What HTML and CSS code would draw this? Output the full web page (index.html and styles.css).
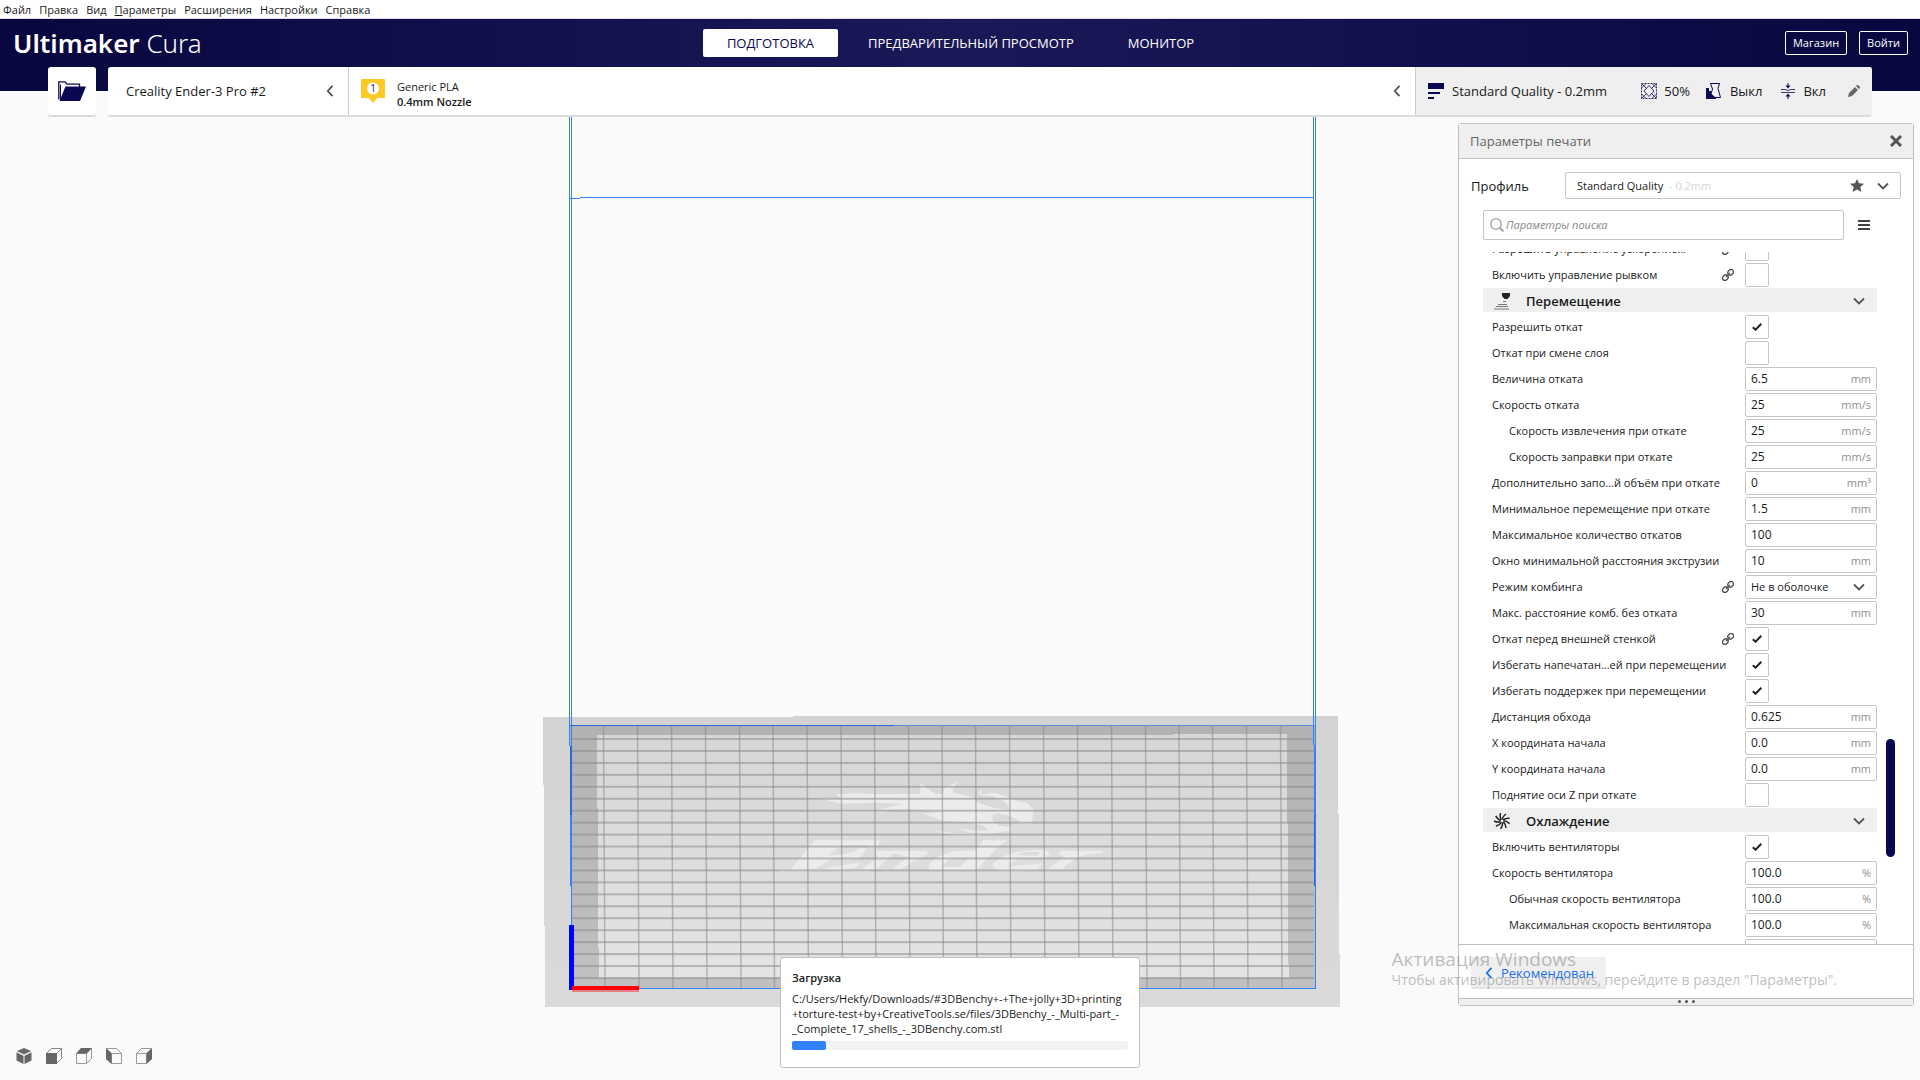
FILE: index.html
```html
<!DOCTYPE html>
<html lang="ru">
<head>
<meta charset="utf-8">
<title>Ultimaker Cura</title>
<link rel="stylesheet" href="styles.css">
</head>
<body>
<svg class="defs" aria-hidden="true">
  <symbol id="link" viewBox="0 0 12 12"><g fill="none" stroke="#555" stroke-width="1.400" transform="rotate(-45 6 6)"><rect x="-.8" y="3.600" width="6" height="4.800" rx="2.400"/><rect x="6.800" y="3.600" width="6" height="4.800" rx="2.400"/><path d="M3.200 6h5.600"/></g></symbol>
  <symbol id="down" viewBox="0 0 12 12"><path d="M1 3.500 6 8.500 11 3.500" fill="none" stroke="#555" stroke-width="1.800"/></symbol>
  <symbol id="left" viewBox="0 0 12 12"><path d="M8.500 .8 3.800 6 8.500 11.200" fill="none" stroke="currentColor" stroke-width="1.800"/></symbol>
</svg>

<nav class="menubar">
  <button>Файл</button><button>Правка</button><button>Вид</button><button><u>П</u>араметры</button><button>Расширения</button><button>Настройки</button><button>Справка</button>
</nav>

<header class="top">
  <div class="brandbar">
    <div class="logo"><b>Ultimaker</b> Cura</div>
    <nav class="stages">
      <button class="stage-tab active">ПОДГОТОВКА</button>
      <button class="stage-tab">ПРЕДВАРИТЕЛЬНЫЙ ПРОСМОТР</button>
      <button class="stage-tab">МОНИТОР</button>
    </nav>
    <div class="account">
      <button class="outline">Магазин</button>
      <button class="outline">Войти</button>
    </div>
  </div>
  <div class="toolbar">
    <button class="open" aria-label="Открыть файл">
      <svg width="28" height="20" viewBox="0 0 28 20"><path d="M.8 18.500V.8H7l2 2.400h12.500V6" fill="none" stroke="#0a0850" stroke-width="1.300"/><path d="M2.500 18V3.500" stroke="#0a0850" stroke-width="1"/><path d="M7.500 5.500H28L22 20H1.500z" fill="#0a0850"/></svg>
    </button>
    <div class="config">
      <button class="machine"><span>Creality Ender-3 Pro #2</span><svg class="chev" width="12" height="14"><use href="#left"/></svg></button>
      <button class="material">
        <svg width="24" height="24" viewBox="0 0 24 24"><path d="M1 0h22q1 0 1 1v17q0 1-1 1h-6.500L12 24 7.500 19H1q-1 0-1-1V1q0-1 1-1z" fill="#ffc924"/><circle cx="12" cy="9.500" r="6" fill="#fff"/><text x="12" y="13" text-anchor="middle" font-size="10" fill="#222">1</text></svg>
        <span class="material-text"><span>Generic PLA</span><b>0.4mm Nozzle</b></span>
        <svg class="chev" width="12" height="14"><use href="#left"/></svg>
      </button>
      <button class="summary">
        <svg width="16" height="16" viewBox="0 0 16 16" fill="#0a0850"><path d="M0 0h16v6H0zM0 9h12v2H0zM0 14h6v2H0z"/></svg>
        <span class="quality">Standard Quality - 0.2mm</span>
        <svg width="16" height="16" viewBox="0 0 16 16" fill="none" stroke="#0a0850" stroke-width=".8"><path d="M.5.5h15v15H.5z" stroke-dasharray="2 1"/><path d="M8 2.500 13 8l-5 5.500L3 8zM.5 5 5 .5M11 .5 15.500 5M.5 11 5 15.500M15.500 11 11 15.500M.5.5l5 5M15.500.5l-5 5M.5 15.500l5-5M15.500 15.500l-5-5"/></svg>
        <span class="infill">50%</span>
        <svg width="16" height="16" viewBox="0 0 16 16"><path d="M0 5h3v6h4v5H0zM3 8h2v5h5v3H3z" fill="#0a0850"/><path d="M4.500.5h9l-1.500 5 2.500 9H9L5 11l1.500-5z" fill="#efefef" stroke="#0a0850"/></svg>
        <span class="support">Выкл</span>
        <svg width="14" height="16" viewBox="0 0 14 16"><path d="M7 0v4M7 16v-4" stroke="#0a0850"/><path d="M4.500 2.500h5L7 5.500zM4.500 13.500h5L7 10.500z" fill="#0a0850"/><path d="M0 9.500h14M0 6.500h4q3 2 6 0h4" fill="none" stroke="#0a0850" opacity=".8"/></svg>
        <span class="adhesion">Вкл</span>
        <svg width="12" height="12" viewBox="0 0 12 12" fill="#666"><path d="M0 12l1-4 6-6 3 3-6 6zM8 1l1-1h1l2 2v1l-1 1z"/></svg>
      </button>
    </div>
  </div>
</header>

<main class="viewport">
  <svg class="scene" viewBox="0 117 1920 963" preserveAspectRatio="xMidYMax slice" shape-rendering="crispEdges" aria-hidden="true">
    <defs>
      <linearGradient id="base" x1="0" y1="0" x2="0" y2="1"><stop offset="0" stop-color="#d3d3d3"/><stop offset="1" stop-color="#dadada"/></linearGradient>
      <linearGradient id="rim" x1="0" y1="0" x2="0" y2="1"><stop offset="0" stop-color="#b2b2b2"/><stop offset="1" stop-color="#c0c0c0"/></linearGradient>
      <linearGradient id="bed" x1="0" y1="0" x2="0" y2="1"><stop offset="0" stop-color="#d6d6d6"/><stop offset="1" stop-color="#e4e4e4"/></linearGradient>
      <pattern id="rows" x="0" y="738" width="12" height="11.950" patternUnits="userSpaceOnUse"><rect width="12" height="1.500" fill="#8b8b8b" fill-opacity=".55"/></pattern>
    </defs>
    <path fill="url(#base)" d="M543 717H793V716H1338V814H1339V954H1340V1007H545V926H544V785H543z"/>
    <path fill="url(#rim)" d="M570 725H1315V988H571z"/>
    <path fill="url(#bed)" d="M597 735H1173V734H1287V823H1288V964H1289V978H599V948H598V807H597z"/>
    <g transform="translate(760 760) scale(.3333)" fill="#ececec" shape-rendering="auto">
      <path d="M146 108 190 114 243 117 228 103 300 99 345 103 480 101 482 68 500 84 525 101 548 102 555 82 592 66 577 86 580 98 640 112 650 126 700 143 752 150 738 128 700 108 664 108 655 98 665 90 664 104 705 98 740 110 768 122 800 128 822 148 815 192 778 190 780 183 750 168 715 160 698 166 698 182 718 198 755 200 750 212 705 220 660 222 650 216 688 212 672 197 625 186 550 182 488 160 548 158 445 148 345 150 430 132 345 128 243 131 215 124z"/>
      <path d="M236 153H382V157H236zM508 210 570 218 660 222 660 228 580 226zM588 202 640 212 690 212 700 220 630 218z"/>
      <path d="M165 241H365L350 261 330 262 328 255H245L205 285H243L310 268 280 292 215 296 170 325 90 330zM60 330 180 328 330 332V336L180 334 60 336z"/>
      <path d="M258 300 300 294 320 265H300L265 285zM205 322 300 308 290 322 250 330H200zM345 272H500L505 280 460 305 420 328H395L445 290 400 280 350 328H305L355 292zM520 300Q560 268 645 272L670 241H742L710 265 650 330H510Q500 315 520 300zM565 300 545 320H600L630 290zM700 310Q740 268 850 270 880 276 860 292L770 298 740 320 848 310 830 330 760 336Q690 336 700 310zM770 285 830 287 840 276 790 276zM905 272H1028V279L980 284 950 292 905 328H865L915 288 895 284z"/>
      <path d="M170 331H930V334H170z" opacity=".7"/>
    </g>
    <path fill="url(#rows)" d="M572 738H1314V980H572z"/>
    <g stroke="#8b8b8b" stroke-opacity=".55" stroke-width="1.500" shape-rendering="auto">
      <path d="M603.500 726l1.500 262M637.500 726l1.500 262M671.500 726l1.500 262M705.500 726l1.500 262M739.500 726l1.500 262M773 726l1.500 262M807 726l1.500 262M841 726l1.500 262M874.500 726l1.500 262M908.500 726l1.500 262M942 726l1.500 262M975.500 726l1.500 262M1009.500 726l1.500 262M1043.500 726l1.500 262M1077.500 726l1.500 262M1111.500 726l1.500 262M1145.500 726l1.500 262M1179 726l1.500 262M1212.500 726l1.500 262M1246.500 726l1.500 262M1280.500 726l1.500 262"/>
    </g>
    <g fill="#3282ff">
      <path d="M569 117h1v629h-1zM571 117h1v873h-1zM1313 117h1v628h-1zM1315 117h1v872h-1z"/>
      <path d="M570 198h10v1h-10zM580 197h734v1H580zM570 815h2v71h-2zM1314 745h2v70h-2zM572 988h743v1H572z"/>
    </g>
    <path fill="#286bd2" d="M570 725h324v1H570zM570 746h2v69h-2zM1314 815h1v71h-1z"/>
    <path fill="#5e8bd2" d="M894 725h420v1H894z"/>
    <path fill="#e98080" d="M572 990h67v2h-67z"/>
    <path fill="#00f" d="M569 925h5v65h-5z"/>
    <path fill="#f00" d="M572 986h67v4h-67z"/>
  </svg>

  <nav class="views">
    <button aria-label="3D"><svg width="16" height="16" viewBox="0 0 16 16" fill="#666"><path d="M8 0l7 3-7 3.500L1 3zM.5 4.300 7.500 7.700V16L.5 12.500zM15.500 4.300 8.500 7.700V16l7-3.500z"/></svg></button>
    <button aria-label="Спереди"><svg width="16" height="16" viewBox="0 0 16 16" fill="none" stroke="#888"><path d="M.5 5.500 5.500.5h10v10l-5 5M10.500 5.500l5-5"/><path d="M0 5h11v11H0z" fill="#666" stroke="none"/></svg></button>
    <button aria-label="Сверху"><svg width="16" height="16" viewBox="0 0 16 16" fill="none" stroke="#999"><path d="M.5 5.500h10v10H.5zM10.500 15.500l5-5V.5"/><path d="M0 5.500 5 0h11l-5 5.500z" fill="#666" stroke="none"/></svg></button>
    <button aria-label="Слева"><svg width="16" height="16" viewBox="0 0 16 16" fill="none" stroke="#999"><path d="M5.500 5.500h10v10h-10zM.5.5h10l5 5"/><path d="M0 0l5.500 5v11L0 11z" fill="#666" stroke="none"/></svg></button>
    <button aria-label="Справа"><svg width="16" height="16" viewBox="0 0 16 16" fill="none" stroke="#999"><path d="M.5 5.500h10v10H.5zM.5 5.500l5-5h10"/><path d="M16 0l-5.500 5v11L16 11z" fill="#666" stroke="none"/></svg></button>
  </nav>

  <section class="message">
    <h2>Загрузка</h2>
    <p>C:/Users/Hekfy/Downloads/#3DBenchy+-+The+jolly+3D+printing<br>+torture-test+by+CreativeTools.se/files/3DBenchy_-_Multi-part_-<br>_Complete_17_shells_-_3DBenchy.com.stl</p>
    <div class="progress" role="progressbar" aria-valuenow="10"><div class="bar" style="width:10%"></div></div>
  </section>

  <aside class="panel">
    <div class="panel-head">
      <h1>Параметры печати</h1>
      <button aria-label="Закрыть"><svg width="12" height="12" viewBox="0 0 12 12"><path d="M1 1l10 10M11 1 1 11" stroke="#555" stroke-width="3"/></svg></button>
    </div>
    <div class="profile">
      <label for="profile">Профиль</label>
      <div class="profile-box">
        <select id="profile"><option>Standard Quality</option></select>
        <span class="profile-note">- 0.2mm</span>
        <span class="profile-icons"><svg width="14" height="13" viewBox="0 0 14 13"><path d="M7 0l2 4.300 5 .5-3.700 3.200L11.400 13 7 10.400 2.600 13l1.100-5L0 4.800l5-.5z" fill="#555"/></svg><svg width="12" height="12"><use href="#down"/></svg></span>
      </div>
    </div>
    <div class="search-row">
      <div class="search"><svg width="14" height="14" viewBox="0 0 14 14" fill="none" stroke="#aaa" stroke-width="1.500"><circle cx="6" cy="6" r="5.200"/><path d="M9.700 9.700 13.500 13.500" stroke-width="2"/></svg><input type="text" placeholder="Параметры поиска" aria-label="Параметры поиска"></div>
      <button aria-label="Видимость параметров"><svg width="12" height="12" viewBox="0 0 12 12"><path d="M0 1h12v2H0zM0 5h12v2H0zM0 9h12v2H0z" fill="#444"/></svg></button>
    </div>
    <div class="list-wrap">
      <div class="list">
        <label class="row"><span>Разрешить управление ускорение...</span><svg><use href="#link"/></svg><input type="checkbox"></label>
        <label class="row"><span>Включить управление рывком</span><svg><use href="#link"/></svg><input type="checkbox"></label>
        <div class="cat"><button><svg width="16" height="18" viewBox="0 0 16 18"><path d="M8 1h8v3l-2.500 3h-3L8 4z" fill="#222"/><path d="M9 9.500h3M4 12.500h9M2 14.500h12M0 17h15" stroke="#777" stroke-width="1.200"/></svg><b>Перемещение</b><svg width="12" height="12"><use href="#down"/></svg></button></div>
        <label class="row"><span>Разрешить откат</span><input type="checkbox" checked></label>
        <label class="row"><span>Откат при смене слоя</span><input type="checkbox"></label>
        <label class="row"><span>Величина отката</span><span class="field"><input type="text" value="6.5"><i>mm</i></span></label>
        <label class="row"><span>Скорость отката</span><span class="field"><input type="text" value="25"><i>mm/s</i></span></label>
        <label class="row sub"><span>Скорость извлечения при откате</span><span class="field"><input type="text" value="25"><i>mm/s</i></span></label>
        <label class="row sub"><span>Скорость заправки при откате</span><span class="field"><input type="text" value="25"><i>mm/s</i></span></label>
        <label class="row"><span>Дополнительно запо...й объём при откате</span><span class="field"><input type="text" value="0"><i>mm³</i></span></label>
        <label class="row"><span>Минимальное перемещение при откате</span><span class="field"><input type="text" value="1.5"><i>mm</i></span></label>
        <label class="row"><span>Максимальное количество откатов</span><span class="field"><input type="text" value="100"></span></label>
        <label class="row"><span>Окно минимальной расстояния экструзии</span><span class="field"><input type="text" value="10"><i>mm</i></span></label>
        <label class="row"><span>Режим комбинга</span><svg><use href="#link"/></svg><span class="field"><select><option>Не в оболочке</option></select></span></label>
        <label class="row"><span>Макс. расстояние комб. без отката</span><span class="field"><input type="text" value="30"><i>mm</i></span></label>
        <label class="row"><span>Откат перед внешней стенкой</span><svg><use href="#link"/></svg><input type="checkbox" checked></label>
        <label class="row"><span>Избегать напечатан...ей при перемещении</span><input type="checkbox" checked></label>
        <label class="row"><span>Избегать поддержек при перемещении</span><input type="checkbox" checked></label>
        <label class="row"><span>Дистанция обхода</span><span class="field"><input type="text" value="0.625"><i>mm</i></span></label>
        <label class="row"><span>X координата начала</span><span class="field"><input type="text" value="0.0"><i>mm</i></span></label>
        <label class="row"><span>Y координата начала</span><span class="field"><input type="text" value="0.0"><i>mm</i></span></label>
        <label class="row"><span>Поднятие оси Z при откате</span><input type="checkbox"></label>
        <div class="cat"><button><svg width="16" height="16" viewBox="-8 -8 16 16"><g fill="none" stroke="#222" stroke-width="1.500"><path id="blade" d="M0-1.500Q1-5 4-7"/><use href="#blade" transform="rotate(40)"/><use href="#blade" transform="rotate(80)"/><use href="#blade" transform="rotate(120)"/><use href="#blade" transform="rotate(160)"/><use href="#blade" transform="rotate(200)"/><use href="#blade" transform="rotate(240)"/><use href="#blade" transform="rotate(280)"/><use href="#blade" transform="rotate(320)"/></g></svg><b>Охлаждение</b><svg width="12" height="12"><use href="#down"/></svg></button></div>
        <label class="row"><span>Включить вентиляторы</span><input type="checkbox" checked></label>
        <label class="row"><span>Скорость вентилятора</span><span class="field"><input type="text" value="100.0"><i>%</i></span></label>
        <label class="row sub"><span>Обычная скорость вентилятора</span><span class="field"><input type="text" value="100.0"><i>%</i></span></label>
        <label class="row sub"><span>Максимальная скорость вентилятора</span><span class="field"><input type="text" value="100.0"><i>%</i></span></label>
        <div class="row"><span></span><span class="field"><input type="text" aria-label="Порог скорости вентилятора"></span></div>
      </div>
      <div class="thumb"></div>
    </div>
    <div class="panel-foot">
      <button><svg width="12" height="12"><use href="#left"/></svg>Рекомендован</button>
    </div>
    <div class="grip"><i></i><i></i><i></i></div>
  </aside>

  <div class="watermark"><strong>Активация Windows</strong><span>Чтобы активировать Windows, перейдите в раздел "Параметры".</span></div>
</main>
</body>
</html>
```
FILE: styles.css
```css
* { box-sizing: border-box; }
body {
  margin: 0;
  height: 100vh;
  display: flex;
  flex-direction: column;
  overflow: hidden;
  background: #fafafa;
  color: #191919;
  font: 11px/16px "Open Sans", "Noto Sans", sans-serif;
}
button, input, select { font: inherit; color: inherit; margin: 0; }
button { border: 0; padding: 0; background: none; text-align: left; }
svg { display: block; flex: none; }
h1, h2, p { margin: 0; }
.defs { position: absolute; width: 0; height: 0; }

.menubar {
  display: flex;
  gap: 8px;
  height: 19px;
  padding: 1px 3px 0;
  background: #fff;
  border-bottom: 1px solid #ddd;
}

.top {
  flex: none;
  background: linear-gradient(90deg, #08073f, #1b1858 50%, #08073f) 0 0 / 100% 72px no-repeat;
}
.brandbar {
  display: grid;
  grid-template-columns: 1fr auto 1fr;
  align-items: center;
  height: 48px;
  padding: 0 12px 0 13px;
  color: #fff;
}
.logo { font: 300 26px/32px "Noto Sans", sans-serif; }
.logo b { font-weight: 600; }
.stages { display: flex; gap: 6px; }
.stage-tab {
  height: 28px;
  padding: 0 24px;
  border-radius: 2px;
  font-size: 13px;
}
.stage-tab.active { background: #fff; color: #0a0850; }
.account { display: flex; gap: 12px; justify-content: flex-end; }
.outline {
  height: 24px;
  padding: 0 7px;
  border: 1px solid #fff;
  border-radius: 2px;
}

.toolbar { display: flex; gap: 12px; padding: 0 48px; }
.open, .config {
  height: 50px;
  background: #fff;
  border-bottom: 2px solid #dcdcdc;
  border-radius: 3px;
}
.open { width: 48px; display: grid; place-items: center; }
.config { flex: 1; display: flex; overflow: hidden; font-size: 13px; }
.config > button { display: flex; align-items: center; }
.chev { color: #555; }
.machine { width: 240px; padding: 0 12px 0 18px; justify-content: space-between; }
.material { flex: 1; padding: 0 12px; gap: 12px; border-left: 1px solid #ccc; font-size: 11px; line-height: 15px; }
.material-text { flex: 1; display: flex; flex-direction: column; padding-top: 6px; }
.material b { font-weight: 600; }
.summary { width: 457px; padding: 0 12px; background: #efefef; border-left: 1px solid #ccc; }
.quality { flex: 1; margin-left: 8px; }
.infill { margin: 0 16px 0 7px; }
.support { margin: 0 19px 0 8px; }
.adhesion { margin: 0 22px 0 8px; }

.viewport { position: relative; flex: 1; min-height: 0; display: flex; justify-content: flex-end; padding: 6px 6px 74px; }
.scene { position: absolute; inset: 0; width: 100%; height: 100%; }
.views { position: absolute; left: 16px; bottom: 16px; display: flex; gap: 14px; }

.message {
  position: absolute;
  bottom: 12px;
  left: 50%;
  width: 360px;
  margin-left: -180px;
  padding: 11px;
  height: 111px;
  background: #fff;
  border: 1px solid #c0c0c0;
  border-radius: 3px;
  line-height: 15px;
}
.message h2 { font-size: 11px; line-height: 18px; font-weight: 600; margin-bottom: 4px; }
.message p { white-space: nowrap; }
.progress { height: 9px; margin-top: 5px; background: #f3f3f3; border-radius: 2px; }
.bar { height: 100%; background: #3282ff; border-radius: 2px; }

.panel {
  position: relative;
  width: 456px;
  display: flex;
  flex-direction: column;
  background: #fff;
  border: 1px solid #c0c0c0;
  border-radius: 3px;
}
.panel-head {
  display: flex;
  align-items: center;
  justify-content: space-between;
  height: 35px;
  padding: 0 11px;
  background: #efefef;
  border-bottom: 1px solid #c0c0c0;
}
.panel-head h1 { font-size: 13px; font-weight: 400; color: #666; }
.profile { display: flex; align-items: center; justify-content: space-between; margin: 13px 12px 0; font-size: 13px; }
.profile-box { display: grid; width: 336px; font-size: 11px; }
.profile-box > * { grid-area: 1 / 1; align-self: center; }
select { appearance: none; background: #fff; border: 1px solid #c5c5c5; border-radius: 2px; }
.profile-box select { height: 27px; padding: 0 11px; }
.profile-note { padding-left: 104px; color: #d5d5d5; pointer-events: none; }
.profile-icons { justify-self: end; display: flex; align-items: center; gap: 13px; margin-right: 12px; pointer-events: none; }
.search-row { display: flex; align-items: center; gap: 14px; margin: 11px 0 12px 24px; }
.search { display: flex; align-items: center; gap: 2px; width: 361px; height: 30px; padding: 0 6px; border: 1px solid #c5c5c5; border-radius: 2px; }
.search input { flex: 1; border: 0; padding: 0; background: none; outline: 0; }
.search input::placeholder { color: #888; font-style: italic; opacity: 1; }

.list-wrap { position: relative; flex: 1; min-height: 0; overflow: hidden; margin-left: 24px; }
.list { width: 394px; margin-top: -16px; }
.row { display: flex; align-items: center; height: 26px; padding-left: 9px; }
.row.sub { padding-left: 26px; }
.row > span:first-child { flex: 1; white-space: nowrap; }
.row > svg { width: 12px; height: 12px; margin-right: 11px; }
.row input[type="checkbox"] {
  appearance: none;
  width: 24px;
  height: 24px;
  margin-right: 108px;
  border: 1px solid #c5c5c5;
  border-radius: 2px;
}
.row input[type="checkbox"]:checked {
  background: url("data:image/svg+xml,%3Csvg xmlns='http://www.w3.org/2000/svg' width='10' height='8'%3E%3Cpath d='M.8 4.200 3.600 6.700 9.300 .8' fill='none' stroke='%23222' stroke-width='2'/%3E%3C/svg%3E") center no-repeat;
}
.field { display: flex; align-items: center; width: 132px; height: 24px; border: 1px solid #c5c5c5; border-radius: 2px; padding: 0 5px; }
.field input { flex: 1; min-width: 0; width: 60px; border: 0; padding: 0; background: none; outline: 0; font-size: 12px; }
.field i { font-style: normal; color: #909090; }
.field select {
  flex: 1;
  border: 0;
  padding: 0;
  background: url("data:image/svg+xml,%3Csvg xmlns='http://www.w3.org/2000/svg' width='12' height='12'%3E%3Cpath d='M1 3.500 6 8.500 11 3.500' fill='none' stroke='%23555' stroke-width='1.800'/%3E%3C/svg%3E") right 6px center no-repeat;
}
.cat { height: 26px; }
.cat button { display: flex; align-items: center; width: 100%; height: 24px; padding: 1px 12px 0 11px; background: #efefef; font-size: 13px; }
.cat b { flex: 1; margin-left: 16px; font-weight: 600; }
.thumb { position: absolute; right: 18px; top: 487px; width: 9px; height: 118px; border-radius: 5px; background: #0a0850; }

.panel-foot { height: 54px; padding: 12px; border-top: 1px solid #c0c0c0; }
.panel-foot button {
  display: flex;
  align-items: center;
  gap: 6px;
  height: 32px;
  padding: 1px 12px 0;
  background: #efefef;
  border-bottom: 2px solid #e4e4e4;
  border-radius: 2px;
  color: #196ef0;
  font-size: 13px;
}
.grip { display: flex; justify-content: center; gap: 4px; height: 7px; padding-top: 1px; background: #efefef; border-top: 1px solid #c0c0c0; }
.grip i { width: 3px; height: 3px; border-radius: 2px; background: #555; }

.watermark {
  position: absolute;
  right: 83px;
  bottom: 90px;
  display: flex;
  flex-direction: column;
  color: #8888888c;
  font-size: 14px;
  line-height: 20px;
  pointer-events: none;
}
.watermark strong { font-size: 19px; line-height: 22px; font-weight: 400; }
```
